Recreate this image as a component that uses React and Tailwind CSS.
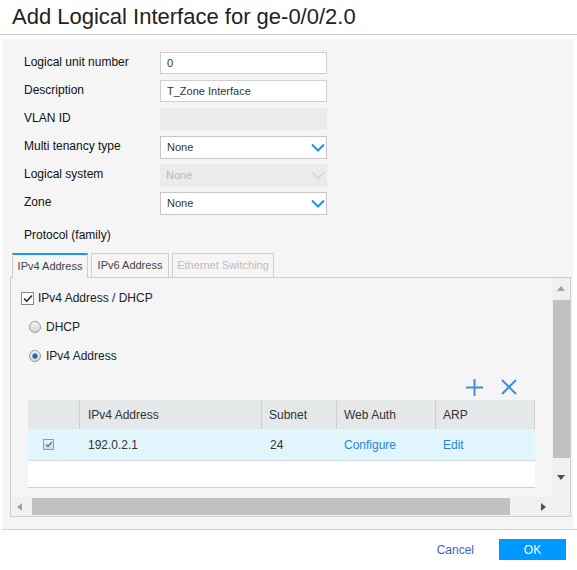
import React from "react";

function Chevron({ disabled }) {
  return (
    <svg width="14" height="9" viewBox="0 0 14 9" className="shrink-0">
      <path d="M1 1.5 L7 7.5 L13 1.5" fill="none" stroke={disabled ? "#c9dcea" : "#1e8fe6"} strokeWidth="2" />
    </svg>
  );
}

function Row({ label, children }) {
  return (
    <div className="flex items-center h-[22px] mb-[6px]">
      <div className="w-[157px] shrink-0 pl-[21px] text-[12px] text-[#111] -mt-[3px]">{label}</div>
      {children}
    </div>
  );
}

function TextInput({ value }) {
  return (
    <div className="w-[167px] h-[22px] bg-white border border-[#cfcfcf] flex items-center pl-[6px] text-[11px] text-[#333]">
      {value}
    </div>
  );
}

function Select({ value, disabled }) {
  return (
    <div
      className={
        disabled
          ? "w-[167px] h-[23px] bg-[#ebebeb] flex items-center justify-between pl-[6px] pr-[2px] text-[11px] text-[#b8b8b8]"
          : "w-[167px] h-[23px] bg-white border border-[#c6c6c6] flex items-center justify-between pl-[6px] pr-[1px] text-[11px] text-[#333]"
      }
    >
      <span>{value}</span>
      <Chevron disabled={disabled} />
    </div>
  );
}

function Radio({ checked }) {
  return (
    <div className="w-[12px] h-[12px] rounded-full border border-[#9a9a9a] bg-gradient-to-b from-[#f4f4f4] to-[#d6d6d6] flex items-center justify-center shrink-0">
      {checked && <div className="w-[6px] h-[6px] rounded-full bg-[#1a5f9e] border border-[#5aa0e0]" />}
    </div>
  );
}

function Tri({ dir }) {
  const paths = {
    up: "M0 5 L4 0 L8 5 Z",
    down: "M0 0 L8 0 L4 5 Z",
    left: "M5 0 L5 8 L0 4 Z",
    right: "M0 0 L5 4 L0 8 Z",
  };
  const vertical = dir === "up" || dir === "down";
  return (
    <svg width={vertical ? 8 : 5} height={vertical ? 5 : 8} viewBox={vertical ? "0 0 8 5" : "0 0 5 8"}>
      <path d={paths[dir]} fill={dir === "right" || dir === "down" ? "#505050" : "#a3a3a3"} />
    </svg>
  );
}

export default function App() {
  return (
    <div className="w-[577px] h-[570px] bg-white font-['Liberation_Sans',Arial,sans-serif] text-[#222] overflow-hidden">
      <div className="h-[35px] pl-[12px] pb-[2px] flex items-center text-[22px] text-[#222] border-b border-[#c8c8c8]">
        Add Logical Interface for ge-0/0/2.0
      </div>

      <div className="mt-[4px] ml-[3px] w-[570px] h-[490px] bg-[#f5f5f5] pt-[13px] flex flex-col">
        <Row label="Logical unit number">
          <TextInput value="0" />
        </Row>
        <Row label="Description">
          <TextInput value="T_Zone Interface" />
        </Row>
        <Row label="VLAN ID">
          <div className="w-[167px] h-[22px] bg-[#ebebeb]" />
        </Row>
        <Row label="Multi tenancy type">
          <Select value="None" />
        </Row>
        <Row label="Logical system">
          <Select value="None" disabled />
        </Row>
        <Row label="Zone">
          <Select value="None" />
        </Row>

        <div className="mt-[5px] h-[20px] pl-[21px] flex items-center text-[12px] text-[#111]">Protocol (family)</div>

        <div className="mt-[8px] ml-[9px] flex gap-[3px] h-[24px]">
          <div className="relative z-10 w-[76px] h-[25px] border-t-2 border-t-[#1c9be8] border-x border-x-[#cfcfcf] bg-[#f5f5f5] flex items-center justify-center text-[11px] text-[#444]">
            IPv4 Address
          </div>
          <div className="w-[78px] h-[24px] border-t border-x border-[#cfcfcf] bg-[#f5f5f5] flex items-center justify-center text-[11px] text-[#444]">
            IPv6 Address
          </div>
          <div className="w-[102px] h-[24px] border-t border-x border-[#cfcfcf] bg-[#f5f5f5] flex items-center justify-center text-[11px] text-[#bdbdbd]">
            Ethernet Switching
          </div>
        </div>

        <div className="ml-[7px] w-[561px] h-[240px] border border-[#cfcfcf] flex">
          <div className="w-[541px] flex flex-col">
            <div className="h-[219px] flex flex-col overflow-hidden">
              <div className="mt-[12px] ml-[10px] h-[16px] flex items-center gap-[4px]">
                <div className="w-[13px] h-[13px] bg-white border border-[#8a8a8a] flex items-center justify-center">
                  <svg width="10" height="9" viewBox="0 0 10 9">
                    <path d="M1 4.5 L3.8 7.3 L9 1.5" fill="none" stroke="#222" strokeWidth="1.4" />
                  </svg>
                </div>
                <span className="text-[12px] text-[#222]">IPv4 Address / DHCP</span>
              </div>
              <div className="mt-[13px] ml-[18px] h-[16px] flex items-center gap-[5px]">
                <Radio />
                <span className="text-[12px] text-[#222]">DHCP</span>
              </div>
              <div className="mt-[13px] ml-[18px] h-[16px] flex items-center gap-[5px]">
                <Radio checked />
                <span className="text-[12px] text-[#222]">IPv4 Address</span>
              </div>
              <div className="mt-[15px] h-[16px] flex items-center justify-end pr-[35px] gap-[18px]">
                <svg width="17" height="17" viewBox="0 0 17 17">
                  <path d="M8.5 0 V17 M0 8.5 H17" stroke="#3e8fd8" strokeWidth="2" />
                </svg>
                <svg width="16" height="16" viewBox="0 0 16 16">
                  <path d="M1 1 L15 15 M15 1 L1 15" stroke="#3e8fd8" strokeWidth="2" />
                </svg>
              </div>
              <div className="mt-[5px] ml-[17px] w-[507px] flex flex-col">
                <div className="h-[29px] bg-[#e5e8e9] flex text-[12px] text-[#333]">
                  <div className="w-[52px] border-r border-[#cdd0d2]" />
                  <div className="w-[182px] border-r border-[#cdd0d2] pl-[8px] flex items-center">IPv4 Address</div>
                  <div className="w-[75px] border-r border-[#cdd0d2] pl-[7px] flex items-center">Subnet</div>
                  <div className="w-[99px] border-r border-[#cdd0d2] pl-[7px] flex items-center">Web Auth</div>
                  <div className="w-[99px] border-r border-[#cdd0d2] pl-[7px] flex items-center">ARP</div>
                </div>
                <div className="h-[59px] bg-white border-b border-[#cfcfcf]">
                  <div className="h-[32px] bg-[#e1f5fc] border-b border-dotted border-[#b8c4c8] flex items-center text-[12px] text-[#333]">
                    <div className="w-[52px] pl-[15px] flex items-center">
                      <div className="w-[11px] h-[11px] border border-[#8e9aa6] bg-gradient-to-b from-[#f0f0f0] to-[#d4dde6] flex items-center justify-center">
                        <svg width="8" height="7" viewBox="0 0 8 7">
                          <path d="M1 3.5 L3 5.5 L7 1" fill="none" stroke="#5570a0" strokeWidth="1.3" />
                        </svg>
                      </div>
                    </div>
                    <div className="w-[182px] pl-[8px]">192.0.2.1</div>
                    <div className="w-[75px] pl-[8px]">24</div>
                    <div className="w-[99px] pl-[7px] text-[#1f86e0]">Configure</div>
                    <div className="w-[99px] pl-[7px] text-[#1f86e0]">Edit</div>
                  </div>
                </div>
              </div>
            </div>
            <div className="h-[19px] bg-[#f0f0f0] flex items-center">
              <div className="w-[17px] flex items-center justify-center"><Tri dir="left" /></div>
              <div className="ml-[4px] w-[478px] h-[17px] bg-[#c1c1c1]" />
              <div className="flex-1 flex items-center justify-end pr-[6px]"><Tri dir="right" /></div>
            </div>
          </div>
          <div className="w-[18px] flex flex-col">
            <div className="h-[219px] bg-[#f0f0f0] flex flex-col items-center">
              <div className="h-[20px] w-full flex items-center justify-center"><Tri dir="up" /></div>
              <div className="mt-[2px] w-[17px] h-[158px] bg-[#c1c1c1]" />
              <div className="flex-1 w-full flex items-center justify-center"><Tri dir="down" /></div>
            </div>
            <div className="flex-1 bg-[#f0f0f0]" />
          </div>
        </div>
      </div>

      <div className="ml-[2px] border-t border-[#cfcfcf] h-[40px] flex items-center justify-end pr-[11px]">
        <span className="mr-[25px] text-[12px] text-[#3d63c8]">Cancel</span>
        <div className="w-[67px] h-[21px] bg-[#0099ff] text-white text-[12px] flex items-center justify-center">OK</div>
      </div>
    </div>
  );
}
